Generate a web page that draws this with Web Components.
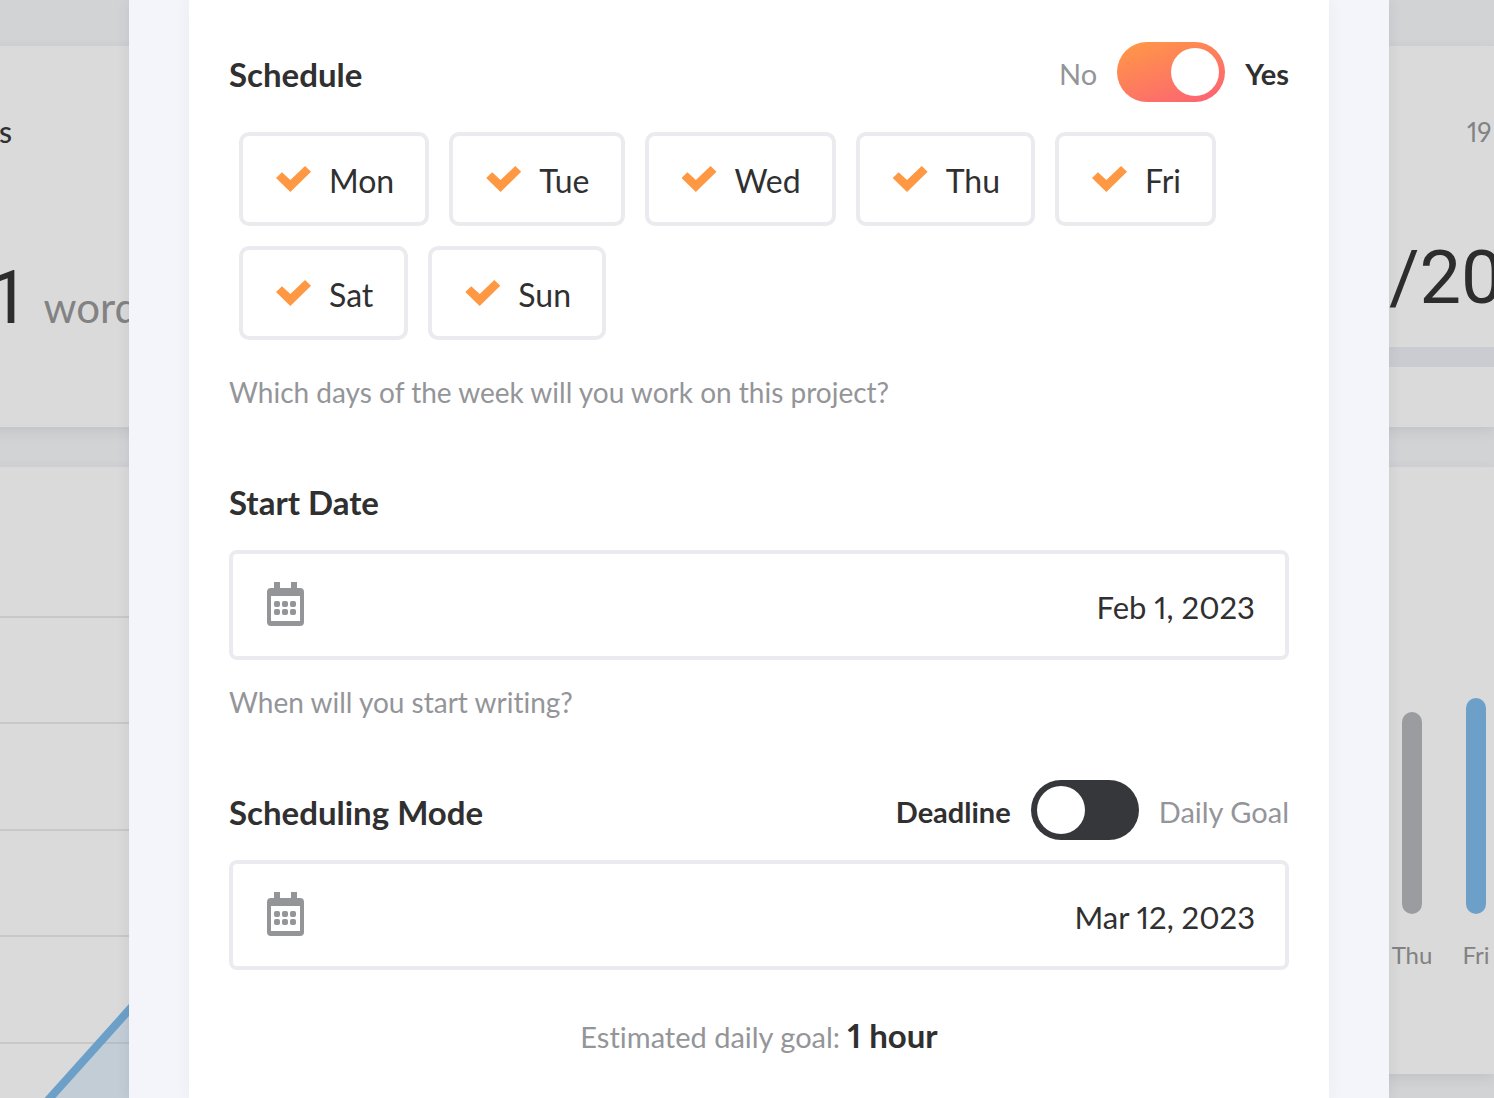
<!DOCTYPE html>
<html lang="en">
<head>
<meta charset="utf-8">
<meta name="viewport" content="width=device-width, initial-scale=1">
<title>Project schedule</title>
<style>
  :root {
    --ink: #303031;
    --muted: #949599;
    --line: #ebebef;
    --accent: #ff9843;
  }
  html, body { height: 100%; }
  body {
    margin: 0;
    overflow: hidden;
    background: #d1d3d5;
    color: var(--ink);
    font-family: Lato, "Open Sans", sans-serif;
    font-variant-ligatures: none;
    font-variant-numeric: proportional-nums;
  }
</style>
</head>
<body>
<app-shell>
  <project-dashboard slot="page"></project-dashboard>
  <modal-panel>
    <form-section heading="Schedule" spacious>
      <toggle-switch slot="action" off="No" on="Yes" checked></toggle-switch>
      <day-picker days="Mon,Tue,Wed,Thu,Fri,Sat,Sun"></day-picker>
      <span slot="help">Which days of the week will you work on this project?</span>
    </form-section>
    <form-section heading="Start Date">
      <date-field name="Start Date" value="Feb 1, 2023"></date-field>
      <span slot="help">When will you start writing?</span>
    </form-section>
    <form-section heading="Scheduling Mode">
      <toggle-switch slot="action" off="Deadline" on="Daily Goal"></toggle-switch>
      <date-field name="Deadline" value="Mar 12, 2023"></date-field>
    </form-section>
    <goal-estimate>Estimated daily goal: <b>1 hour</b></goal-estimate>
  </modal-panel>
</app-shell>

<script>
const define = (name, render) => customElements.define(name, class extends HTMLElement {
  connectedCallback() {
    if (this.shadowRoot) return;
    this.attachShadow({ mode: 'open' }).innerHTML = render(this);
    if (name === 'toggle-switch') {
      const box = this.shadowRoot.querySelector('input');
      box.addEventListener('change', () => this.toggleAttribute('checked', box.checked));
    }
  }
});

define('app-shell', () => `
  <style>
    :host { display: block; position: relative; height: 100vh; overflow: hidden; }
    .overlay { position: absolute; inset: 0; padding: 0 105px 0 129px; overflow: hidden; }
  </style>
  <slot name="page"></slot>
  <div class="overlay"><slot></slot></div>`);

define('modal-panel', () => `
  <style>
    :host { display: block; box-sizing: border-box; min-height: 100%; padding: 0 60px;
      background: #f4f5fa; box-shadow: 0 0 12px rgba(60, 60, 90, .1); }
    .sheet { box-sizing: border-box; min-height: 100vh; padding: 42px 40px; background: #fff;
      box-shadow: 0 0 16px rgba(50, 50, 70, .05); }
  </style>
  <div class="sheet"><slot></slot></div>`);

define('form-section', el => `
  <style>
    :host { display: block; margin-bottom: 58px; }
    header { display: flex; align-items: center; justify-content: space-between; height: 60px; margin-bottom: 20px; }
    :host([spacious]) header { margin-bottom: 30px; }
    h2 { margin: 0; padding-top: 4px; font-size: 33px; line-height: 40px; font-weight: 700; }
    ::slotted([slot=help]) { display: block; margin-top: 22px; font-size: 28px; line-height: 40px; color: var(--muted); }
    :host([spacious]) ::slotted([slot=help]) { margin-top: 32px; }
  </style>
  <header><h2>${el.getAttribute('heading')}</h2><slot name="action"></slot></header>
  <slot></slot>
  <slot name="help"></slot>`);

define('toggle-switch', el => `
  <style>
    :host { display: flex; align-items: center; gap: 20px; font-size: 29px; line-height: 40px; }
    label { padding-top: 4px; }
    .off { font-weight: 700; }
    .on { color: var(--muted); }
    :host([checked]) .off { font-weight: 400; color: var(--muted); }
    :host([checked]) .on { font-weight: 700; color: var(--ink); }
    input { appearance: none; display: flex; box-sizing: border-box; width: 108px; height: 60px; margin: 0;
      padding: 6px; border-radius: 30px; background: #36373b; cursor: pointer; }
    input::before { content: ""; width: 48px; height: 48px; border-radius: 50%; background: #fff; }
    input:checked { justify-content: flex-end; background: linear-gradient(160deg, #ff9a44, #fc6076); }
  </style>
  <label class="off" for="sw">${el.getAttribute('off')}</label>
  <input id="sw" type="checkbox" role="switch" ${el.hasAttribute('checked') ? 'checked' : ''}>
  <label class="on" for="sw">${el.getAttribute('on')}</label>`);

define('day-picker', el => `
  <style>
    :host { display: flex; flex-wrap: wrap; gap: 20px; margin: 0 10px; }
    label { display: flex; align-items: center; gap: 18px; box-sizing: border-box; height: 94px;
      padding: 0 31px 0 33px; border: 4px solid var(--line); border-radius: 10px;
      font-size: 32px; line-height: 40px; cursor: pointer; }
    input { appearance: none; width: 35px; height: 26px; margin: 0; background: #d8d8dc;
      clip-path: polygon(0 46%, 17% 24%, 41% 54%, 83% 0, 100% 22%, 41% 100%); }
    input:checked { background: var(--accent); }
    span { padding-top: 4px; }
  </style>
  ${el.getAttribute('days').split(',').map(d =>
    `<label><input type="checkbox" checked><span>${d}</span></label>`).join('')}`);

define('date-field', el => `
  <style>
    :host { display: block; }
    label { display: flex; align-items: center; gap: 20px; box-sizing: border-box; height: 110px;
      padding: 0 30px 2px 34px; border: 4px solid var(--line); border-radius: 8px; }
    svg { flex: none; width: 37px; height: 44px; fill: var(--muted); }
    input { flex: 1; min-width: 0; border: 0; outline: 0; padding: 6px 0 0; background: none; color: inherit;
      font: 31px/40px Lato, sans-serif; font-variant-numeric: proportional-nums; text-align: right; }
  </style>
  <label>
    <svg viewBox="0 0 37 44" aria-hidden="true">
      <path fill-rule="evenodd" d="M7 0h6v6h11V0h6v6h3a4 4 0 0 1 4 4v30a4 4 0 0 1-4 4H4a4 4 0 0 1-4-4V10a4 4 0 0 1 4-4h3zM4 14v25h29V14z"/>
      <rect x="7" y="19" width="6" height="6" rx="2"/><rect x="15" y="19" width="6" height="6" rx="2"/><rect x="23" y="19" width="6" height="6" rx="2"/>
      <rect x="7" y="27" width="6" height="6" rx="2"/><rect x="15" y="27" width="6" height="6" rx="2"/><rect x="23" y="27" width="6" height="6" rx="2"/>
    </svg>
    <input type="text" aria-label="${el.getAttribute('name')}" value="${el.getAttribute('value')}">
  </label>`);

define('goal-estimate', () => `
  <style>
    :host { display: block; margin-top: -13px; text-align: center; font-size: 29px; line-height: 40px; color: var(--muted); }
    ::slotted(b) { font-size: 33px; color: var(--ink); }
  </style>
  <slot></slot>`);

define('dash-card', () => `
  <style>
    :host { display: block; box-sizing: border-box; overflow: hidden; background: #dadada;
      box-shadow: 0 4px 12px rgba(60, 60, 80, .1); }
  </style>
  <slot></slot>`);

define('project-dashboard', () => `
  <style>
    :host { display: grid; grid-template-columns: 1fr 114px; gap: 40px; height: 100%;
      box-sizing: border-box; padding-top: 46px; margin-left: -14px; }
    .col { display: flex; flex-direction: column; gap: 40px; min-width: 0; }
    .top { height: 381px; }
    .title { padding: 65px 0 0 13px; font-size: 30px; line-height: 40px; font-weight: 500; }
    .count { display: flex; align-items: baseline; gap: 14px; margin-top: 102px; padding-left: 2px; line-height: 90px;
      font-size: 42px; color: #828282; }
    .num { font-family: Roboto, sans-serif; font-size: 74px; font-variant-numeric: tabular-nums; color: #2d2d2d; }
    .trend { flex: 1; }
    svg { display: block; width: 600px; height: 700px; }
    .date { padding: 66px 0 0 87px; font-size: 26px; line-height: 40px; color: #828282; white-space: nowrap; }
    .total { margin-top: 81px; padding-left: 9px; line-height: 90px; white-space: nowrap; }
    .rule { height: 20px; margin-top: 24px; background: #cbccd1; }
    .week { height: 607px; }
    .bars { display: flex; align-items: flex-end; height: 508px; }
    .day { flex: none; display: flex; flex-direction: column; align-items: center; gap: 21px; width: 64px;
      font-size: 24px; line-height: 40px; color: #828282; }
    .bar { width: 20px; height: 202px; border-radius: 10px; background: #9b9ca0; }
    .bar.now { height: 216px; background: #6ca0c9; }
  </style>
  <div class="col">
    <dash-card class="top">
      <div class="title">s</div>
      <div class="count"><span class="num">1</span><span>words</span></div>
    </dash-card>
    <dash-card class="trend">
      <svg viewBox="0 0 600 700" aria-hidden="true">
        <path d="M0 150H600M0 256H600M0 363H600M0 469H600M0 576H600" stroke="#c8c8c8" stroke-width="2"/>
        <path d="M64 631L143 543L233 443V700H2z" fill="#6ca0c9" fill-opacity=".22"/>
        <path d="M2 700L64 631L143 543L233 443" fill="none" stroke="#6ca0c9" stroke-width="8"/>
      </svg>
    </dash-card>
  </div>
  <div class="col">
    <dash-card class="top">
      <div class="date">19</div>
      <div class="num total">/20</div>
      <div class="rule"></div>
    </dash-card>
    <dash-card class="week">
      <div class="bars">
        <div class="day"><div class="bar"></div><span>Thu</span></div>
        <div class="day"><div class="bar now"></div><span>Fri</span></div>
      </div>
    </dash-card>
  </div>`);
</script>
</body>
</html>
